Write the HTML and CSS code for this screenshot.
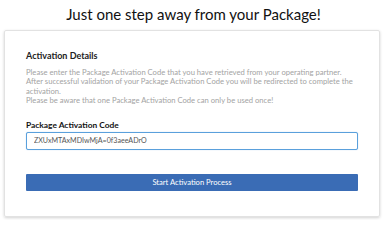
FILE: index.html
```html
<!DOCTYPE html>
<html>
<head>
<meta charset="utf-8">
<link rel="stylesheet" href="styles.css">
</head>
<body>
<h1 class="title">Just one step away from your Package!</h1>
<div class="card">
  <h2 class="card-title">Activation Details</h2>
  <p class="info">Please enter the Package Activation Code that you have retrieved from your operating partner.<br>After successful validation of your Package Activation Code you will be redirected to complete the activation.<br>Please be aware that one Package Activation Code can only be used once!</p>
  <label class="label" for="code">Package Activation Code</label>
  <input class="input" id="code" type="text" value="ZXUxMTAxMDIwMjA=0f3aeeADrO">
  <button class="btn">Start Activation Process</button>
</div>
</body>
</html>
```
FILE: styles.css
```css
* { box-sizing: border-box; }
html, body { margin: 0; padding: 0; background: #fff; }
body {
  font-family: "Lato", "Open Sans", sans-serif;
  width: 387px;
  height: 220px;
  overflow: hidden;
}
.title {
  margin: 0;
  height: 30px;
  padding-top: 3px;
  text-align: center;
  font-size: 15px;
  line-height: 22px;
  font-weight: 400;
  color: #111;
}
.card {
  margin-left: 4px;
  width: 376px;
  height: 187px;
  border: 1px solid #e2e2e2;
  border-radius: 2px;
  box-shadow: 0 1px 3px rgba(0,0,0,0.18);
  padding: 18px 21px 0;
  display: flex;
  flex-direction: column;
}
.card-title {
  margin: 0;
  font-size: 9px;
  line-height: 14px;
  font-weight: 700;
  color: #222;
}
.info {
  margin: 5px 0 0;
  font-size: 7.65px;
  line-height: 9.4px;
  color: #a3a3a3;
}
.label {
  margin-top: 14px;
  font-size: 8.4px;
  line-height: 10px;
  font-weight: 700;
  color: #111;
}
.input {
  margin-top: 2px;
  height: 18px;
  width: 100%;
  border: 1px solid #5aa0dc;
  border-radius: 2px;
  padding: 0 7px;
  font-family: inherit;
  font-size: 7.1px;
  color: #555;
  outline: none;
  box-shadow: 0 0 1px rgba(90,160,220,0.6);
}
.btn {
  margin-top: 24px;
  height: 17px;
  width: 100%;
  border: none;
  border-radius: 1px;
  background: #3a6cb5;
  color: #fff;
  font-family: inherit;
  font-size: 7.6px;
  padding: 0;
}
```
